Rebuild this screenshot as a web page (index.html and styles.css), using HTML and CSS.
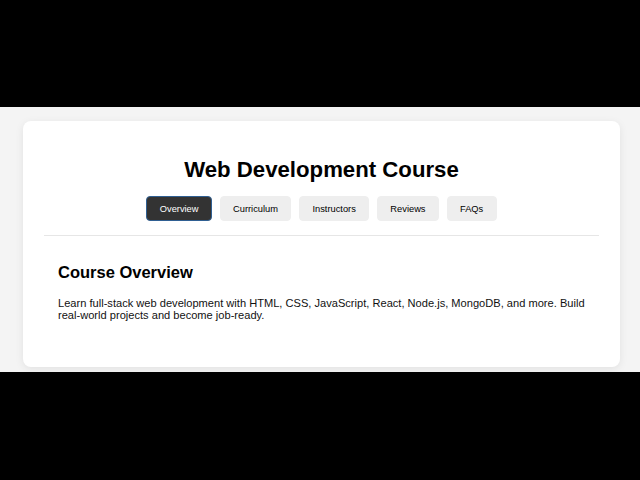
FILE: index.html
```html
<!DOCTYPE html>
<html lang="en">
<head>
<meta charset="utf-8">
<title>Web Development Course</title>
<link rel="stylesheet" href="styles.css">
</head>
<body>
<div class="stage">
  <div class="card">
    <header class="header">
      <h1 class="title">Web Development Course</h1>
      <nav class="tabs">
        <button class="tab active">Overview</button>
        <button class="tab">Curriculum</button>
        <button class="tab">Instructors</button>
        <button class="tab">Reviews</button>
        <button class="tab">FAQs</button>
      </nav>
    </header>
    <section class="content">
      <h2 class="heading">Course Overview</h2>
      <p class="text">Learn full-stack web development with HTML, CSS, JavaScript, React, Node.js, MongoDB, and more. Build real-world projects and become job-ready.</p>
    </section>
  </div>
</div>
</body>
</html>
```

FILE: styles.css
```css
html, body {
  margin: 0;
  padding: 0;
  background: #000;
  font-family: "Liberation Sans", Arial, sans-serif;
  color: #111;
}
.stage {
  margin-top: 107px;
  height: 265px;
  box-sizing: border-box;
  background: #f4f4f4;
  padding: 14px 20px 0 23px;
}
.card {
  background: #fff;
  border-radius: 8px;
  box-shadow: 0 2px 8px rgba(0, 0, 0, 0.08);
  height: 246px;
  box-sizing: border-box;
  padding-top: 36px;
}
.header {
  margin: 0 21px;
  padding-bottom: 14px;
  border-bottom: 1px solid #e6e6e6;
  text-align: center;
}
.title {
  margin: 0 0 13px;
  font-size: 22.2px;
  line-height: 26px;
  font-weight: bold;
  color: #000;
}
.tabs {
  display: flex;
  justify-content: center;
  gap: 7.5px;
}
.tab {
  font-family: "Liberation Sans", Arial, sans-serif;
  font-size: 9.3px;
  height: 25px;
  padding: 0 12.5px;
  border: 1px solid #eeeeee;
  border-radius: 4px;
  background: #eeeeee;
  color: #000;
}
.tab.active {
  background: #333333;
  color: #fff;
  border: 1.5px solid #2f5f92;
}
.content {
  padding: 26px 28px 0 35px;
}
.heading {
  margin: 0 0 15px;
  font-size: 16.5px;
  line-height: 20px;
  font-weight: bold;
  color: #000;
}
.text {
  margin: 0;
  font-size: 11.1px;
  color: #111;
}
```
